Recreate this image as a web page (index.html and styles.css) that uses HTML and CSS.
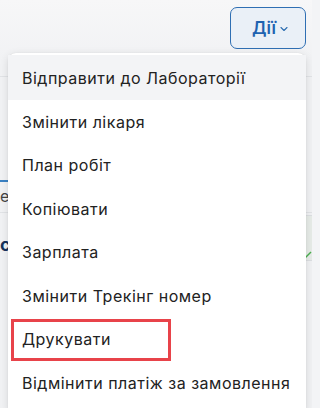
FILE: index.html
```html
<!DOCTYPE html>
<html lang="uk">
<head>
<meta charset="utf-8">
<link rel="stylesheet" href="styles.css">
</head>
<body>
<div class="page">
  <div class="bg">
    <div class="bg-line l1"></div>
    <div class="bg-tab"></div>
    <div class="bg-text t1">е</div>
    <div class="bg-line l2"></div>
    <div class="bg-text t2">с</div>
    <div class="bg-right"></div>
    <svg class="bg-check" width="8" height="8" viewBox="0 0 8 8"><path d="M1 7 L7 1" stroke="#4caf50" stroke-width="1.5"/></svg>
  </div>
  <div class="toolbar">
    <button class="actions">Дії <svg class="chev" width="8" height="6" viewBox="0 0 8 6"><path d="M1 1.5 L4 4.5 L7 1.5" fill="none" stroke="#2b6cb0" stroke-width="1.1" stroke-linecap="round" stroke-linejoin="round"/></svg></button>
  </div>
  <ul class="menu">
    <li class="item hover">Відправити до Лабораторії</li>
    <li class="item">Змінити лікаря</li>
    <li class="item">План робіт</li>
    <li class="item">Копіювати</li>
    <li class="item">Зарплата</li>
    <li class="item">Змінити Трекінг номер</li>
    <li class="item marked">Друкувати<span class="highlight"></span></li>
    <li class="item">Відмінити платіж за замовлення</li>
  </ul>
</div>
</body>
</html>
```
FILE: styles.css
```css
* { box-sizing: border-box; }
html, body { margin: 0; padding: 0; }
body {
  width: 312px;
  height: 408px;
  overflow: hidden;
  background: #f3f4f6;
  font-family: "Inter", "Noto Sans", sans-serif;
}
.page {
  position: relative;
  width: 312px;
  height: 408px;
  background: linear-gradient(#f7f7f8, #f1f2f4 60px, #f1f2f4);
}
.bg { position: absolute; inset: 0; }
.bg-line { position: absolute; left: 0; width: 312px; height: 1px; background: #e1e3e6; }
.l1 { top: 76px; }
.l2 { top: 212px; }
.bg-tab { position: absolute; left: 0; top: 180px; width: 10px; height: 2px; background: #3b82c4; }
.bg-text { position: absolute; left: 0; font-size: 16px; color: #444; }
.t1 { top: 186px; }
.t2 { top: 234px; font-weight: 700; color: #17345c; font-size: 18px; }
.bg-right { position: absolute; right: 0; top: 215px; width: 14px; height: 46px; background: #e7ece8; border-top: 1px solid #dcdfe2; border-bottom: 1px solid #dcdfe2; }
.bg-check { position: absolute; right: 0; top: 251px; }

.toolbar {
  position: relative;
  display: flex;
  justify-content: flex-end;
  padding: 7px 6px 0 0;
}
.actions {
  width: 76px;
  height: 42px;
  border: 1px solid #2f6fb3;
  border-radius: 7px;
  background: #eaf0f7;
  color: #1f62b0;
  font-family: "Inter", "Noto Sans", sans-serif;
  font-size: 17px;
  font-weight: 600;
  display: flex;
  align-items: center;
  justify-content: center;
  gap: 4px;
  padding: 0 0 0 4px;
}
.chev { margin-top: 2px; }

.menu {
  position: relative;
  list-style: none;
  margin: 4px 6px 0 8px;
  padding: 2px 0 10px;
  background: #fff;
  border-radius: 8px;
  box-shadow: 0 2px 8px rgba(0,0,0,0.12), 0 0 1px rgba(0,0,0,0.12);
}
.item {
  position: relative;
  height: 43.5px;
  display: flex;
  align-items: center;
  padding-left: 14px;
  font-size: 16px;
  letter-spacing: 0.5px;
  color: #222;
  white-space: nowrap;
}
.item.hover { background: #f3f4f6; height: 45px; }
.highlight {
  position: absolute;
  left: 3px;
  top: 1px;
  width: 160px;
  height: 42px;
  border: 3px solid #e8434a;
}
```
